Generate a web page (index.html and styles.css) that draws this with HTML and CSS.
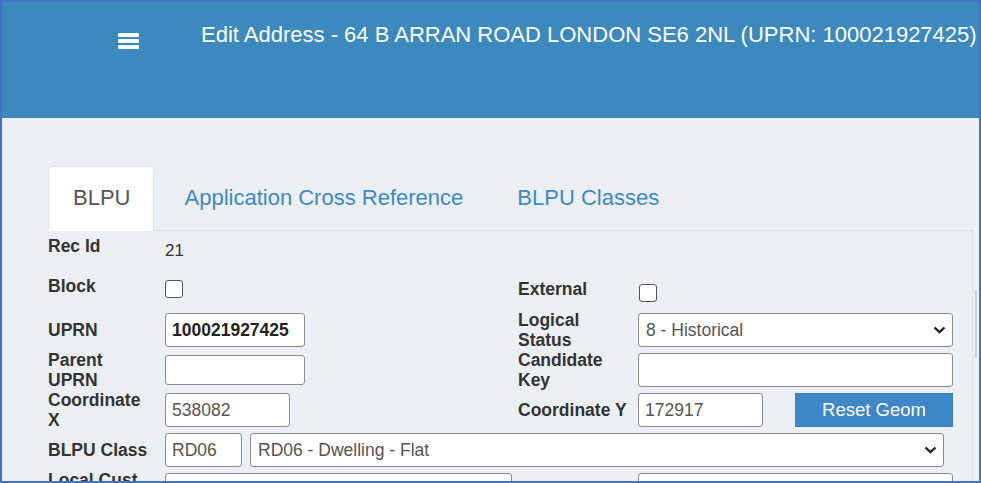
FILE: index.html
```html
<!DOCTYPE html>
<html lang="en">
<head>
    <meta charset="UTF-8">
    <meta name="viewport" content="width=device-width, initial-scale=1.0">
    <title>Edit Address</title>
    <link rel="stylesheet" href="styles.css">
</head>
<body>
    <div class="frame">
        <header class="main-header">
            <a class="menu-toggle" href="#">
                <svg width="21" height="16" viewBox="0 0 21 16">
                    <rect x="0" y="0" width="21" height="4" rx="1" fill="#fff"/>
                    <rect x="0" y="6" width="21" height="4" rx="1" fill="#fff"/>
                    <rect x="0" y="12" width="21" height="4" rx="1" fill="#fff"/>
                </svg>
            </a>
            <h1>Edit Address - 64 B ARRAN ROAD LONDON SE6 2NL (UPRN: 100021927425)</h1>
        </header>

        <div class="content">
            <div class="page">
                <ul class="nav-tabs">
                    <li class="active"><a href="#">BLPU</a></li>
                    <li><a href="#">Application Cross Reference</a></li>
                    <li><a href="#">BLPU Classes</a></li>
                </ul>

                <div class="tab-content">
                    <!-- row: rec id -->
                    <div class="form-row row-rec">
                        <label>Rec Id</label>
                        <div class="value">21</div>
                    </div>

                    <!-- row: block / external -->
                    <div class="form-row row-check">
                        <label>Block</label>
                        <div><input type="checkbox" class="check"></div>
                        <label class="label-ext">External</label>
                        <div><input type="checkbox" class="check check-ext"></div>
                    </div>

                    <div class="form-row">
                        <label>UPRN</label>
                        <div><input type="text" class="field w-140 strong" value="100021927425"></div>
                        <label>Logical Status</label>
                        <div class="select-wrap">
                            <select class="field">
                                <option>8 - Historical</option>
                            </select>
                            <svg class="chevron" width="13" height="8" viewBox="0 0 13 8"><path d="M1.5 1.5 L6.5 6.2 L11.5 1.5" fill="none" stroke="#222" stroke-width="2.4"/></svg>
                        </div>
                    </div>

                    <div class="form-row">
                        <label>Parent UPRN</label>
                        <div><input type="text" class="field w-140 short"></div>
                        <label>Candidate Key</label>
                        <div><input type="text" class="field"></div>
                    </div>

                    <div class="form-row">
                        <label>Coordinate X</label>
                        <div><input type="text" class="field w-125" value="538082"></div>
                        <label>Coordinate Y</label>
                        <div class="coord-y">
                            <input type="text" class="field w-125" value="172917">
                            <button class="btn-primary">Reset Geom</button>
                        </div>
                    </div>

                    <div class="form-row">
                        <label>BLPU Class</label>
                        <div class="class-cell">
                            <input type="text" class="field w-77" value="RD06">
                            <div class="select-wrap w-694">
                                <select class="field">
                                    <option>RD06 - Dwelling - Flat</option>
                                </select>
                                <svg class="chevron" width="13" height="8" viewBox="0 0 13 8"><path d="M1.5 1.5 L6.5 6.2 L11.5 1.5" fill="none" stroke="#222" stroke-width="2.4"/></svg>
                            </div>
                        </div>
                    </div>

                    <div class="form-row">
                        <label>Local Cust Code</label>
                        <div><input type="text" class="field w-347"></div>
                        <label></label>
                        <div><input type="text" class="field"></div>
                    </div>
                </div>
            </div>
            <div class="scroll-track"><div class="thumb"></div></div>
        </div>
    </div>
</body>
</html>
```

FILE: styles.css
```css
* {
    box-sizing: border-box;
}

body {
    margin: 0;
    padding: 0;
    font-family: "Liberation Sans", Arial, sans-serif;
    color: #333;
}

.frame {
    width: 981px;
    height: 483px;
    border: 2px solid #4472c4;
    overflow: hidden;
    background-color: #ecf0f5;
}

.main-header {
    height: 116px;
    background-color: #3c8abd;
    display: flex;
    align-items: flex-start;
    padding: 20px 0 0 116px;
    white-space: nowrap;
}

.menu-toggle {
    display: block;
    margin-top: 11px;
    line-height: 0;
}

.main-header h1 {
    margin: 0 0 0 62px;
    font-size: 22px;
    line-height: 26px;
    font-weight: normal;
    color: #fff;
}

.content {
    display: flex;
    height: 363px;
}

.page {
    flex: 1;
    padding: 48px 0 0 46px;
}

.scroll-track {
    width: 6px;
}

.scroll-track .thumb {
    width: 2px;
    height: 68px;
    margin: 172px 0 0 2px;
    background-color: #d0d5de;
}

/* tabs */
.nav-tabs {
    list-style: none;
    margin: 0;
    padding: 0;
    display: flex;
    border-bottom: 1px solid #dcdfe4;
}

.nav-tabs li {
    margin: 0 5px -1px 0;
}

.nav-tabs a {
    display: block;
    padding: 19px 23px 20px 24px;
    font-size: 22px;
    line-height: 24px;
    color: #3f8ac6;
    text-decoration: none;
    border: 1px solid transparent;
    border-radius: 4px 4px 0 0;
}

.nav-tabs .active a {
    background-color: #fff;
    color: #555;
    border-color: #e2e4e8;
    border-bottom-color: #fff;
}

.tab-content {
    border-right: 1px solid #dcdfe4;
    height: 300px;
}

/* form rows */
.form-row {
    display: grid;
    grid-template-columns: 117px 353px 120px 315px;
    align-items: center;
    height: 40px;
}

.form-row label {
    padding-right: 13px;
    font-size: 17.5px;
    font-weight: bold;
    line-height: 20px;
    color: #333;
}

.form-row label:nth-of-type(2) {
    padding-right: 8px;
}

.row-rec {
    height: 39px;
    align-items: start;
}

.row-rec label {
    padding-top: 5px;
}

.row-rec .value {
    padding-top: 10px;
    font-size: 17px;
    line-height: 20px;
    color: #333;
}

.row-check {
    align-items: start;
}

.row-check label {
    padding-top: 6px;
}

.row-check .label-ext {
    padding-top: 9px;
}

.check {
    appearance: none;
    -webkit-appearance: none;
    display: block;
    width: 18px;
    height: 18px;
    margin: 10px 0 0 0;
    border: 1.5px solid #555;
    border-radius: 3px;
    background-color: #fff;
}

.check-ext {
    margin: 14px 0 0 1px;
}

.field {
    display: block;
    width: 100%;
    height: 34px;
    padding: 0 6px;
    font-family: "Liberation Sans", Arial, sans-serif;
    font-size: 17.5px;
    color: #555;
    background-color: #fff;
    border: 1px solid #8d8d8d;
    border-radius: 3px;
    outline: none;
}

.field.strong {
    font-weight: bold;
    color: #222;
}

.field.short {
    height: 30px;
}

.w-140 { width: 140px; }
.w-125 { width: 125px; }
.w-77 { width: 77px; }
.w-347 { width: 347px; }
.w-694 { width: 694px; }

select.field {
    appearance: none;
    -webkit-appearance: none;
    padding-left: 7px;
}

.select-wrap {
    position: relative;
}

.select-wrap .chevron {
    position: absolute;
    right: 7px;
    top: 13px;
}

.coord-y {
    display: flex;
    justify-content: space-between;
}

.btn-primary {
    width: 158px;
    height: 34px;
    font-family: "Liberation Sans", Arial, sans-serif;
    font-size: 18.5px;
    color: #fff;
    background-color: #3d87c8;
    border: 1px solid #3a80bd;
    border-radius: 0;
    cursor: pointer;
}

.class-cell {
    grid-column: 2 / 5;
    display: flex;
    gap: 8px;
}
```
